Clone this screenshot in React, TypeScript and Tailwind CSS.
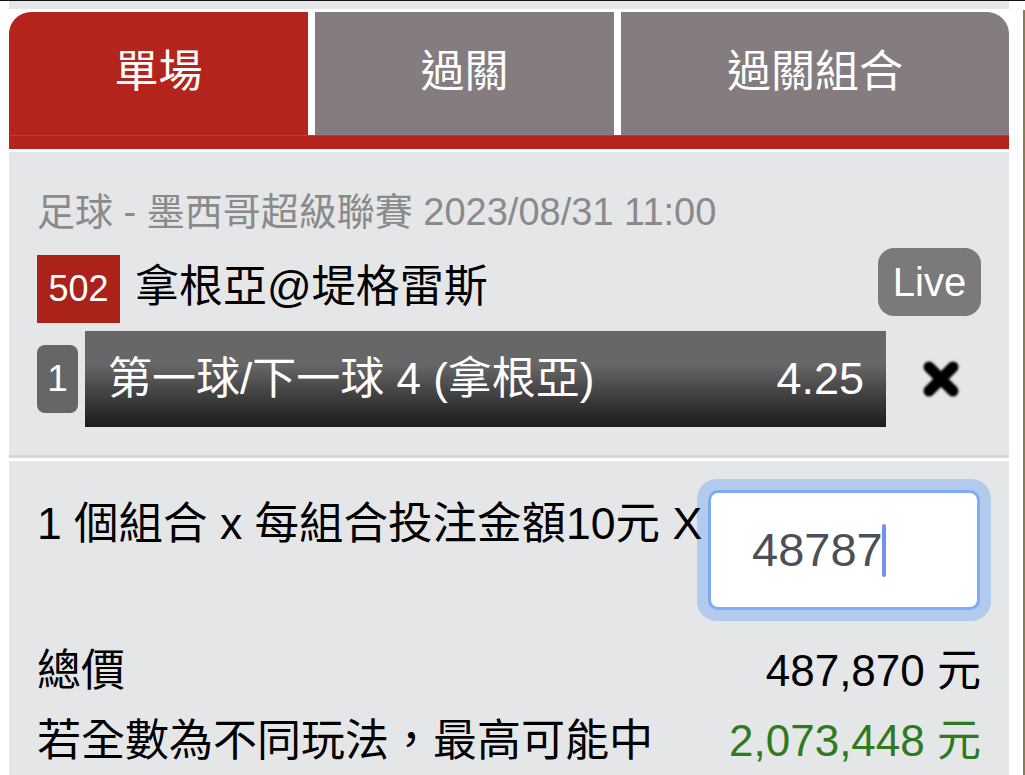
const font = { fontFamily: '"Liberation Sans", "Noto Sans CJK TC", sans-serif' };

const tabs = [
  { label: '單場', active: true },
  { label: '過關', active: false },
  { label: '過關組合', active: false },
];

const CloseIcon = () => (
  <svg width="46" height="46" viewBox="0 0 46 46" className="blur-[0.8px]">
    <path
      d="M11 11 L35 35 M35 11 L11 35"
      stroke="#000"
      strokeWidth="11"
      strokeLinecap="round"
    />
  </svg>
);

const BetSlip = () => {
  return (
    <div
      className="w-[1025px] h-[775px] overflow-hidden bg-white border-t border-[#111]"
      style={font}
    >
      <div className="flex h-full">
        <div className="w-[9px] shrink-0" />

        <div className="w-[1000px] shrink-0 flex flex-col">
          <div className="h-[8px] bg-[#e6e6e8]" />
          <div className="h-[3px]" />

          {/* tabs */}
          <div className="flex gap-[7px] h-[123px]">
            {tabs.map((tab, i) => (
              <div
                key={tab.label}
                className={
                  (tab.active ? 'bg-[#b4241c] ' : 'bg-[#857c80] ') +
                  (i === 0 ? 'w-[299px] rounded-tl-[22px] ' : '') +
                  (i === 1 ? 'w-[299px] ' : '') +
                  (i === 2 ? 'flex-1 rounded-tr-[22px] ' : '') +
                  'flex items-center justify-center pb-[4px] text-white text-[44px] leading-[52px]'
                }
              >
                {tab.label}
              </div>
            ))}
          </div>
          <div className="h-[14px] bg-[#b4241c] border-t border-[#bd3a32]" />
          <div className="h-[3px]" />

          {/* selection */}
          <div className="h-[303px] bg-[#e5e6e8] px-[28px] pt-[38px]">
            <p className="text-[38px] leading-[45px] text-[#8a8a8a] whitespace-nowrap">
              足球 - 墨西哥超級聯賽 2023/08/31 11:00
            </p>

            <div className="mt-[13px] flex items-start justify-between">
              <div className="flex items-center gap-[15px] mt-[7px]">
                <span className="w-[83px] h-[68px] bg-[#aa2219] text-white text-[36px] flex items-center justify-center">
                  502
                </span>
                <span className="text-[44px] leading-[52px] text-black pb-[4px]">
                  拿根亞@堤格雷斯
                </span>
              </div>
              <span className="w-[103px] h-[68px] rounded-[16px] bg-[#7a7a7a] text-white text-[40px] flex items-center justify-center">
                Live
              </span>
            </div>

            <div className="mt-[8px] flex items-center h-[96px]">
              <span className="w-[41px] h-[68px] rounded-[8px] bg-[#666] text-white text-[37px] flex items-center justify-center">
                1
              </span>
              <div className="ml-[7px] w-[801px] h-[96px] bg-linear-to-b from-[#676767] from-35% to-[#1c1c1c] flex items-center justify-between pl-[23px] pr-[22px] text-white">
                <span className="text-[44px] leading-[52px]">第一球/下一球 4 (拿根亞)</span>
                <span className="text-[45px] leading-[52px]">4.25</span>
              </div>
              <div className="ml-[32px]">
                <CloseIcon />
              </div>
            </div>
          </div>
          <div className="h-[3px] bg-[#d6d7d9]" />
          <div className="h-[3px]" />

          {/* stake */}
          <div className="flex-1 bg-[#e5e6e8] pt-[18px]">
            <div className="flex items-start justify-between pl-[28px] pr-[18px]">
              <p className="relative z-10 min-w-0 mt-[19px] text-[44.5px] leading-[52px] text-black whitespace-nowrap">
                1 個組合 x 每組合投注金額10元 X
              </p>
              <div className="shrink-0 w-[294px] h-[142px] rounded-[20px] bg-[#b2caec] p-[11px]">
                <div className="h-full rounded-[10px] bg-white border-[3px] border-[#7faaf7] flex items-center pl-[41px]">
                  <span className="text-[47px] leading-[52px] text-[#4b4f57]">48787</span>
                  <span className="inline-block w-[4px] h-[53px] -ml-[1px] rounded-full bg-[#7590f0]" />
                </div>
              </div>
            </div>

            <div className="px-[28px] mt-[24px] text-[44px] leading-[52px]">
              <div className="flex justify-between text-black">
                <span>總價</span>
                <span>487,870 元</span>
              </div>
              <div className="mt-[18px] flex justify-between">
                <span className="text-black">若全數為不同玩法，最高可能中</span>
                <span className="text-[#2e7a1f]">2,073,448 元</span>
              </div>
            </div>
          </div>
        </div>

        <div className="flex-1 flex justify-end pt-[9px]">
          <div className="w-[2px] bg-[#8d7c4c]" />
        </div>
      </div>
    </div>
  );
};

export default function App() {
  return <BetSlip />;
}
